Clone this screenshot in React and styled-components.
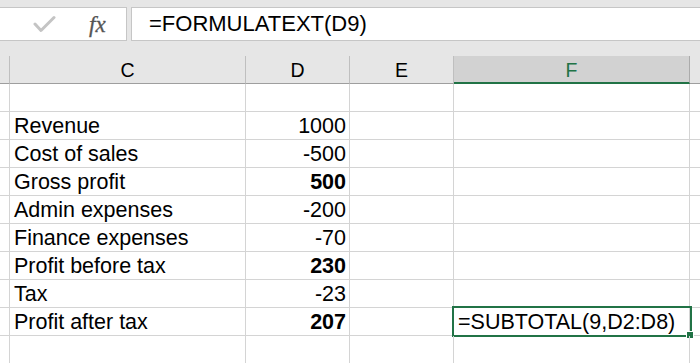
import styled, { createGlobalStyle } from "styled-components";

const GlobalStyle = createGlobalStyle`
  html, body {
    margin: 0;
    padding: 0;
    background: #ffffff;
    overflow: hidden;
  }
  body {
    font-family: "Liberation Sans", Arial, sans-serif;
  }
`;

const COLS = [
  { key: "C", width: 236 },
  { key: "D", width: 104 },
  { key: "E", width: 104 },
  { key: "F", width: 236 },
];

const ROWS = [
  { label: "", value: "" },
  { label: "Revenue", value: "1000" },
  { label: "Cost of sales", value: "-500" },
  { label: "Gross profit", value: "500", bold: true },
  { label: "Admin expenses", value: "-200" },
  { label: "Finance expenses", value: "-70" },
  { label: "Profit before tax", value: "230", bold: true },
  { label: "Tax", value: "-23" },
  { label: "Profit after tax", value: "207", bold: true, formula: "=SUBTOTAL(9,D2:D8)" },
  { label: "", value: "" },
];

const App = () => {
  return (
    <Page>
      <GlobalStyle />
      <FormulaBar>
        <ActionBox>
          <CheckIcon width="24" height="20" viewBox="0 0 24 20">
            <polyline points="2,9 8,15.5 21,2.5" />
          </CheckIcon>
          <FxLabel>fx</FxLabel>
        </ActionBox>
        <FormulaInput>=FORMULATEXT(D9)</FormulaInput>
      </FormulaBar>

      <HeaderRow>
        <CornerCell />
        {COLS.map((c) => (
          <ColHeader key={c.key} $width={c.width} $active={c.key === "F"}>
            {c.key}
          </ColHeader>
        ))}
        <ColHeaderRest />
      </HeaderRow>

      {ROWS.map((r, i) => (
        <Row key={i}>
          <RowStub />
          <Cell $width={236}>{r.label}</Cell>
          <Cell $width={104} $align="right" $bold={r.bold}>
            {r.value}
          </Cell>
          <Cell $width={104} />
          <Cell $width={236} $selected={!!r.formula}>
            {r.formula}
          </Cell>
          <CellRest />
        </Row>
      ))}
    </Page>
  );
};

export default App;

const Page = styled.div`
  width: 700px;
  height: 363px;
  overflow: hidden;
  background: #ffffff;
`;

const FormulaBar = styled.div`
  display: flex;
  gap: 4px;
  height: 34px;
  padding: 7px 0 15px;
  background: #e6e6e6;
`;

const ActionBox = styled.div`
  box-sizing: border-box;
  width: 127px;
  height: 34px;
  display: flex;
  align-items: center;
  padding-left: 33px;
  background: #ffffff;
  border: 1px solid #c6c6c6;
  border-left: none;
`;

const CheckIcon = styled.svg`
  margin-top: 2px;
  fill: none;
  stroke: #c4c4c4;
  stroke-width: 3;
  stroke-linecap: round;
  stroke-linejoin: round;
`;

const FxLabel = styled.span`
  margin-left: 32px;
  margin-top: 1px;
  font-family: "Liberation Serif", "Times New Roman", serif;
  font-style: italic;
  font-size: 23px;
  color: #555555;
  -webkit-text-stroke: 0.3px #555555;
`;

const FormulaInput = styled.div`
  box-sizing: border-box;
  flex: 1;
  height: 34px;
  padding-left: 17px;
  background: #ffffff;
  border: 1px solid #c6c6c6;
  border-right: none;
  font-size: 22px;
  line-height: 32px;
  color: #000000;
  white-space: nowrap;
`;

const HeaderRow = styled.div`
  display: flex;
  height: 28px;
  background: #e6e6e6;
`;

const CornerCell = styled.div`
  box-sizing: border-box;
  width: 10px;
  border-right: 1px solid #bfbfbf;
  border-bottom: 1px solid #9e9e9e;
`;

const ColHeader = styled.div`
  box-sizing: border-box;
  width: ${(p) => p.$width}px;
  display: flex;
  justify-content: center;
  align-items: flex-end;
  padding-bottom: ${(p) => (p.$active ? "2px" : "3px")};
  background: ${(p) => (p.$active ? "#d2d2d2" : "#e6e6e6")};
  color: ${(p) => (p.$active ? "#217346" : "#000000")};
  border-right: 1px solid ${(p) => (p.$active ? "#ababab" : "#bfbfbf")};
  border-bottom: ${(p) => (p.$active ? "2px solid #217346" : "1px solid #9e9e9e")};
  font-size: 19.5px;
  line-height: 19px;
`;

const ColHeaderRest = styled.div`
  flex: 1;
  border-bottom: 1px solid #9e9e9e;
`;

const Row = styled.div`
  display: flex;
  height: 28px;
`;

const RowStub = styled.div`
  box-sizing: border-box;
  width: 10px;
  border-right: 1px solid #d4d4d4;
  border-bottom: 1px solid #d4d4d4;
`;

const Cell = styled.div`
  position: relative;
  box-sizing: border-box;
  width: ${(p) => p.$width}px;
  padding: 1px ${(p) => (p.$align === "right" ? "3px" : "0")} 0
    ${(p) => (p.$align === "right" ? "0" : "4px")};
  text-align: ${(p) => p.$align || "left"};
  font-size: 21.5px;
  line-height: 26px;
  font-weight: ${(p) => (p.$bold ? 700 : 400)};
  color: #000000;
  white-space: nowrap;
  border-right: 1px solid #d4d4d4;
  border-bottom: 1px solid #d4d4d4;

  ${(p) =>
    p.$selected &&
    `
    &::before {
      content: "";
      position: absolute;
      top: -2px;
      left: -2px;
      right: -3px;
      bottom: -2px;
      border: 2px solid #217346;
      pointer-events: none;
    }
    &::after {
      content: "";
      position: absolute;
      right: -4px;
      bottom: -3px;
      width: 6px;
      height: 6px;
      background: #217346;
      outline: 1px solid #ffffff;
    }
  `}
`;

const CellRest = styled.div`
  flex: 1;
  border-bottom: 1px solid #d4d4d4;
`;
